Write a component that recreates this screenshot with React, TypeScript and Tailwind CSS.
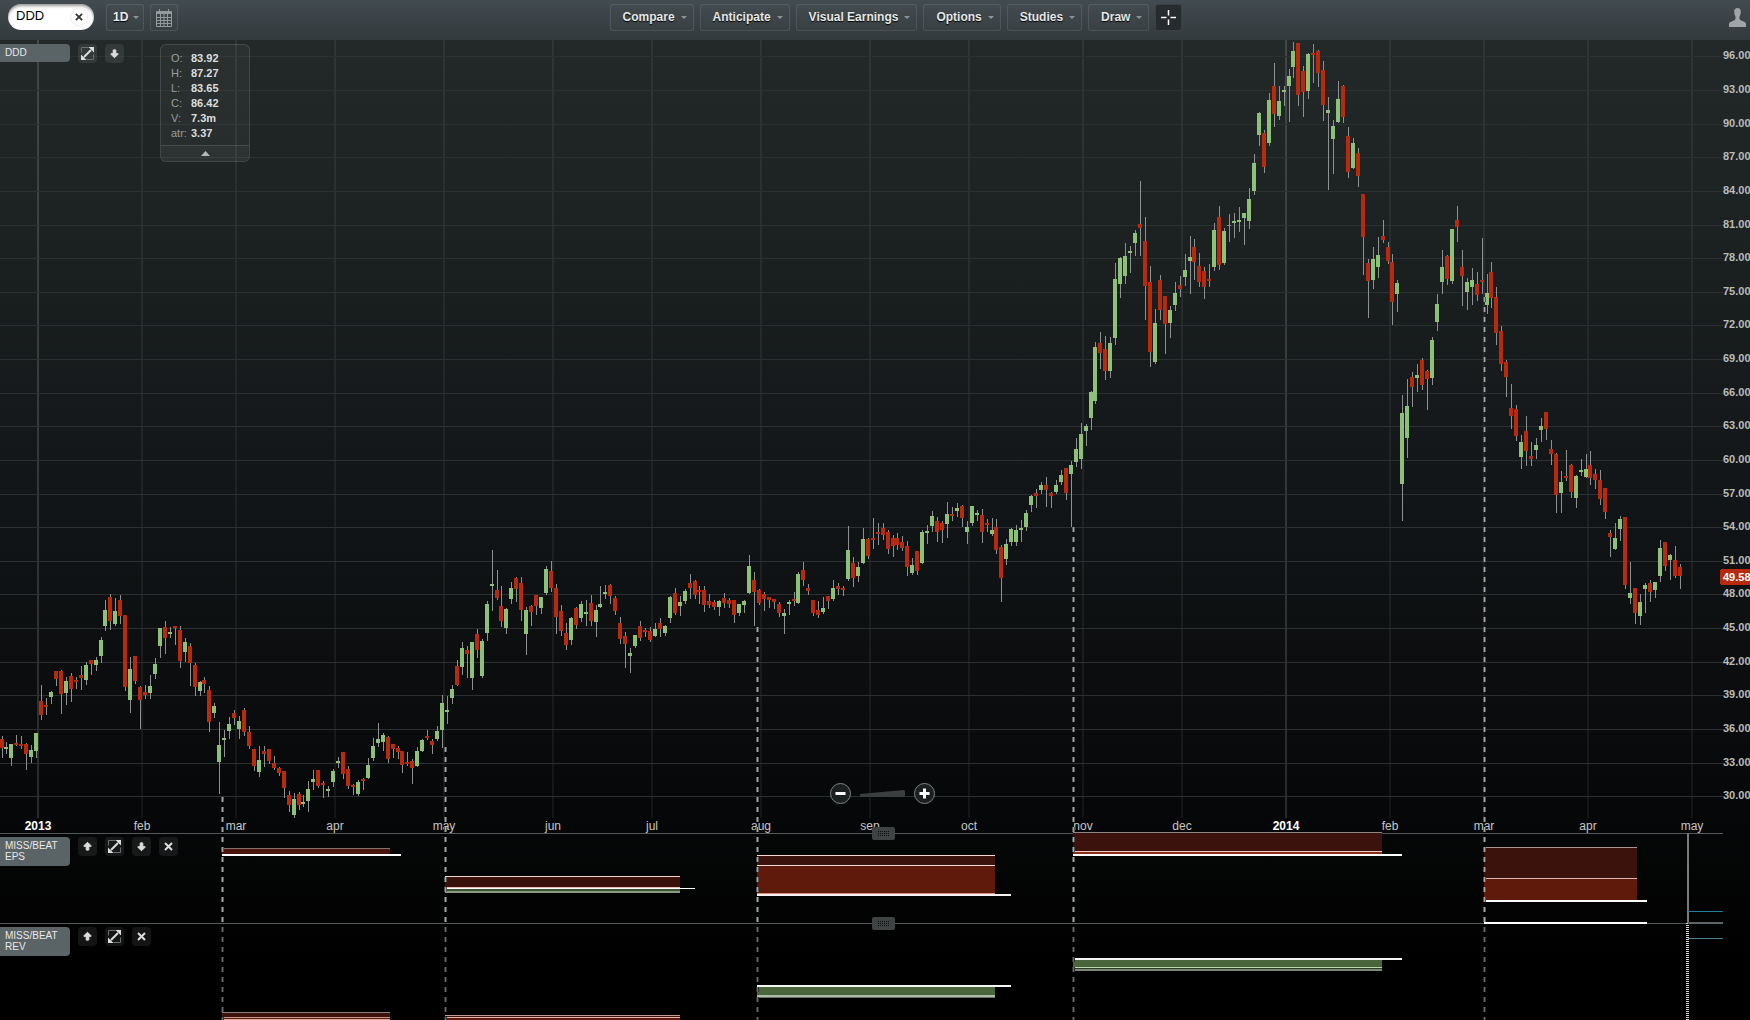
import { ArrowBigDown, ArrowBigUp } from "lucide-react"
import type { ReactNode } from "react"

// [high, open, close, low] as y positions in the price pane, one entry per trading day
const candles: number[][] = [
  [736, 739, 748, 758], [742, 749, 747, 754], [744, 758, 744, 766], [735, 743, 745, 746], [736, 744, 746, 749],
  [743, 744, 754, 770], [745, 757, 750, 763], [733, 751, 733, 758], [685, 701, 715, 720], [698, 705, 707, 715],
  [691, 697, 692, 704], [671, 671, 679, 686], [670, 671, 694, 714], [677, 693, 681, 705], [673, 676, 689, 702],
  [677, 680, 682, 689], [666, 675, 678, 690], [662, 680, 665, 685], [660, 660, 664, 675], [657, 665, 660, 671],
  [637, 656, 640, 663], [600, 626, 610, 631], [594, 597, 621, 630], [598, 624, 611, 626], [595, 600, 616, 624],
  [615, 615, 687, 691], [657, 700, 669, 713], [656, 656, 681, 684], [686, 687, 700, 729], [685, 692, 695, 699],
  [675, 693, 686, 699], [658, 674, 664, 679], [628, 646, 628, 658], [621, 627, 638, 654], [627, 634, 632, 638],
  [626, 626, 628, 645], [626, 630, 661, 668], [638, 652, 642, 662], [643, 646, 663, 686], [663, 665, 687, 696],
  [681, 691, 682, 696], [677, 680, 684, 693], [686, 690, 722, 732], [703, 713, 706, 718], [722, 762, 745, 794],
  [730, 740, 738, 757], [717, 731, 724, 739], [710, 713, 718, 725], [716, 729, 721, 739], [708, 710, 732, 736],
  [726, 732, 746, 749], [749, 749, 766, 771], [746, 772, 760, 777], [746, 751, 754, 767], [749, 749, 761, 764],
  [756, 763, 768, 770], [767, 768, 773, 776], [771, 771, 788, 798], [791, 795, 805, 812], [793, 815, 799, 818],
  [792, 794, 805, 810], [795, 804, 802, 807], [781, 801, 789, 812], [770, 782, 779, 790], [770, 770, 786, 788],
  [781, 783, 785, 798], [786, 791, 789, 797], [769, 782, 771, 787], [757, 763, 761, 768], [752, 752, 774, 779],
  [766, 769, 786, 789], [784, 785, 787, 795], [780, 794, 782, 796], [778, 779, 781, 790], [758, 778, 765, 779],
  [738, 758, 746, 761], [723, 743, 739, 747], [733, 742, 735, 751], [736, 737, 759, 763], [744, 744, 749, 758],
  [746, 748, 752, 759], [751, 751, 765, 773], [752, 762, 764, 766], [759, 761, 768, 784], [747, 766, 751, 767],
  [739, 751, 740, 752], [730, 736, 738, 740], [739, 741, 745, 754], [726, 739, 731, 741], [695, 730, 703, 748],
  [696, 712, 710, 724], [685, 698, 689, 704], [660, 666, 685, 686], [642, 667, 648, 675], [646, 650, 654, 678],
  [642, 678, 642, 690], [629, 634, 650, 658], [639, 676, 641, 678], [601, 633, 604, 641], [550, 586, 584, 611],
  [570, 590, 598, 600], [586, 606, 621, 627], [608, 628, 609, 634], [582, 599, 588, 604], [577, 578, 589, 602],
  [577, 583, 610, 621], [607, 634, 610, 655], [605, 606, 612, 626], [595, 595, 606, 615], [597, 608, 597, 614],
  [566, 593, 569, 595], [561, 571, 588, 592], [584, 588, 617, 634], [605, 611, 631, 636], [623, 633, 645, 650],
  [617, 640, 618, 645], [607, 608, 625, 629], [601, 618, 604, 622], [600, 614, 612, 626], [595, 603, 621, 626],
  [605, 622, 610, 637], [586, 607, 604, 608], [585, 594, 592, 599], [584, 585, 596, 604], [596, 598, 611, 615],
  [617, 623, 639, 644], [632, 636, 644, 668], [648, 656, 653, 673], [635, 646, 635, 648], [621, 626, 638, 641],
  [628, 630, 632, 637], [627, 631, 640, 642], [623, 636, 629, 637], [618, 623, 629, 637], [625, 633, 626, 636],
  [596, 618, 597, 623], [588, 593, 613, 615], [596, 606, 602, 616], [589, 601, 591, 604], [574, 583, 588, 599],
  [580, 581, 595, 599], [586, 590, 592, 604], [586, 590, 605, 612], [594, 601, 605, 608], [600, 602, 607, 610],
  [600, 607, 601, 616], [593, 598, 603, 608], [598, 600, 604, 608], [600, 600, 615, 623], [604, 613, 604, 616],
  [600, 605, 601, 613], [555, 593, 566, 594], [572, 580, 592, 626], [589, 590, 603, 605], [592, 594, 599, 611],
  [597, 597, 600, 608], [599, 599, 602, 609], [602, 604, 613, 617], [609, 616, 613, 634], [600, 604, 602, 615],
  [592, 599, 601, 606], [572, 603, 574, 604], [562, 570, 580, 586], [584, 588, 591, 595], [600, 600, 613, 616],
  [601, 610, 615, 618], [597, 612, 608, 614], [596, 596, 601, 609], [580, 599, 588, 601], [583, 586, 589, 595],
  [586, 588, 590, 596], [526, 579, 550, 581], [557, 563, 578, 587], [562, 576, 567, 582], [528, 563, 539, 564],
  [538, 539, 556, 559], [518, 538, 540, 549], [523, 532, 534, 545], [523, 528, 535, 540], [530, 532, 549, 554],
  [535, 538, 546, 557], [533, 538, 545, 550], [536, 542, 548, 551], [541, 546, 567, 576], [558, 573, 565, 575],
  [551, 551, 571, 575], [530, 563, 532, 564], [525, 533, 531, 544], [511, 526, 516, 532], [517, 521, 532, 542],
  [521, 523, 530, 543], [502, 524, 514, 538], [507, 514, 516, 521], [503, 511, 508, 517], [505, 506, 518, 527],
  [521, 532, 527, 544], [506, 523, 506, 526], [510, 515, 513, 521], [509, 515, 532, 543], [519, 523, 525, 532],
  [518, 534, 530, 536], [519, 527, 550, 554], [545, 547, 578, 602], [539, 559, 544, 565], [528, 542, 529, 546],
  [525, 542, 530, 546], [520, 530, 528, 542], [510, 527, 513, 531], [495, 505, 496, 512], [489, 493, 496, 508],
  [482, 490, 485, 494], [477, 485, 490, 507], [492, 493, 496, 508], [480, 492, 485, 494], [470, 482, 475, 485],
  [468, 468, 493, 500], [461, 474, 465, 527], [438, 462, 449, 467], [423, 459, 434, 469], [424, 431, 426, 446],
  [391, 418, 392, 430], [342, 401, 347, 404], [332, 343, 353, 369], [336, 349, 371, 380], [337, 371, 343, 378],
  [263, 338, 279, 345], [257, 284, 258, 298], [243, 276, 256, 284], [246, 253, 251, 273], [230, 243, 233, 256],
  [181, 224, 228, 256], [217, 241, 286, 320], [266, 282, 352, 367], [309, 362, 323, 364], [275, 280, 310, 320],
  [296, 296, 324, 354], [306, 323, 310, 338], [282, 305, 293, 311], [276, 285, 289, 297], [254, 277, 270, 286],
  [236, 261, 257, 294], [239, 247, 262, 280], [253, 266, 282, 287], [267, 271, 287, 299], [264, 279, 281, 287],
  [223, 267, 230, 271], [206, 217, 265, 270], [228, 263, 231, 265], [214, 225, 225, 242], [213, 223, 221, 238],
  [207, 222, 220, 232], [213, 218, 213, 245], [188, 221, 199, 229], [154, 191, 163, 195], [112, 135, 113, 146],
  [130, 133, 167, 173], [93, 143, 100, 146], [63, 86, 114, 127], [86, 116, 101, 120], [86, 92, 90, 106],
  [69, 86, 76, 122], [42, 67, 51, 78], [43, 43, 95, 106], [66, 71, 92, 117], [53, 91, 54, 99],
  [44, 53, 55, 83], [50, 51, 73, 87], [61, 70, 105, 121], [97, 113, 110, 190], [120, 139, 126, 174],
  [81, 122, 99, 123], [85, 86, 117, 123], [127, 136, 172, 178], [138, 168, 143, 169], [148, 153, 176, 187],
  [194, 194, 237, 275], [259, 263, 281, 318], [247, 280, 259, 289], [237, 267, 255, 278], [220, 236, 240, 243],
  [242, 247, 261, 264], [254, 262, 302, 325], [280, 294, 283, 312], [395, 484, 413, 521], [379, 438, 406, 458],
  [372, 377, 387, 407], [364, 378, 375, 392], [358, 360, 385, 390], [370, 371, 379, 410], [337, 378, 340, 385],
  [294, 322, 304, 331], [250, 282, 267, 294], [255, 256, 279, 285], [229, 281, 229, 284], [206, 220, 227, 242],
  [250, 267, 276, 306], [278, 292, 282, 310], [268, 287, 280, 305], [272, 284, 295, 301], [238, 280, 282, 294],
  [274, 305, 293, 314], [262, 272, 298, 308], [287, 297, 333, 345], [326, 331, 364, 371], [360, 362, 377, 397],
  [384, 408, 416, 429], [405, 409, 436, 441], [435, 457, 442, 469], [416, 431, 451, 466], [442, 456, 459, 466],
  [438, 450, 445, 459], [418, 430, 426, 442], [412, 412, 429, 440], [440, 449, 454, 465], [453, 454, 495, 513],
  [471, 493, 482, 513], [450, 476, 478, 481], [464, 465, 492, 498], [475, 498, 476, 508], [459, 472, 470, 476],
  [454, 477, 469, 478], [451, 465, 478, 485], [469, 474, 480, 489], [470, 480, 499, 505], [488, 488, 512, 519],
  [530, 533, 537, 557], [523, 549, 538, 550], [516, 529, 519, 541], [517, 517, 585, 589], [562, 598, 593, 604],
  [588, 588, 613, 624], [594, 616, 602, 625], [583, 589, 585, 613], [580, 583, 592, 602], [582, 590, 582, 598],
  [540, 576, 548, 582], [542, 542, 566, 571], [554, 560, 555, 580], [546, 560, 576, 578], [564, 567, 576, 589],
]

const months: [string, number][] = [
  ["2013", 38], ["feb", 142], ["mar", 236], ["apr", 335], ["may", 444], ["jun", 553],
  ["jul", 652], ["aug", 761], ["sep", 870], ["oct", 969], ["nov", 1083], ["dec", 1182],
  ["2014", 1286], ["feb", 1390], ["mar", 1484], ["apr", 1588], ["may", 1692],
]

// earnings dates: x and where the dashed line starts
const earnings = [[222, 797], [445, 747], [757, 627], [1073, 527], [1484, 297]]

const prices = Array.from({ length: 23 }, (_, i) => ({
  label: (96 - i * 3).toFixed(2),
  y: Math.round(56.4 + i * 33.63),
}))

const menus = ["Compare", "Anticipate", "Visual Earnings", "Options", "Studies", "Draw"]

const stats = [
  ["O:", "83.92"],
  ["H:", "87.27"],
  ["L:", "83.65"],
  ["C:", "86.42"],
  ["V:", "7.3m"],
  ["atr:", "3.37"],
]

// x, y, width, height, fill
type Bar = [number, number, number, number, string]

const epsBars: Bar[] = [
  [222, 848, 168, 1, "#85716e"], [222, 849, 168, 5, "#4a130b"], [222, 854, 179, 2, "#ffffff"],
  [445, 876, 235, 1, "#f0d5d0"], [445, 877, 235, 10, "#3b120c"], [445, 887, 235, 1, "#e8b9b0"],
  [445, 888, 250, 1, "#ffffff"], [445, 889, 235, 2, "#3c5230"], [445, 891, 235, 2, "#8c9a86"],
  [757, 855, 238, 1, "#f3d8d4"], [757, 856, 238, 9, "#3b120c"], [757, 865, 238, 1, "#f3d8d4"],
  [757, 866, 238, 27, "#601a0b"], [757, 893, 238, 1, "#d98c7c"], [757, 894, 254, 2, "#f5f0ef"],
  [1073, 832, 309, 1, "#8e8684"], [1073, 833, 309, 18, "#3b120c"], [1073, 851, 309, 1, "#f3c9c2"],
  [1073, 852, 309, 2, "#8a2a18"], [1073, 854, 329, 2, "#ffffff"],
  [1484, 847, 153, 1, "#a89491"], [1484, 848, 153, 30, "#3b120c"], [1484, 878, 153, 1, "#d9b8b2"],
  [1484, 879, 153, 21, "#601a0b"], [1484, 900, 163, 2, "#ffffff"],
]

const revBars: Bar[] = [
  [1484, 922, 163, 2, "#ffffff"],
  [222, 1012, 168, 1, "#8c7f7d"], [222, 1013, 168, 4, "#3b120c"], [222, 1017, 168, 1, "#c79a92"],
  [222, 1018, 168, 1, "#601a0b"], [222, 1019, 168, 1, "#d9a79e"],
  [445, 1015, 235, 1, "#c79a92"], [445, 1016, 235, 1, "#3b120c"], [445, 1017, 235, 1, "#e0b5ad"],
  [445, 1018, 235, 2, "#601a0b"],
  [757, 985, 254, 2, "#f4f6f3"], [757, 987, 238, 8, "#49653b"], [757, 995, 238, 2, "#aebda7"],
  [757, 997, 238, 1, "#6a7366"],
  [1073, 958, 329, 2, "#f4f6f3"], [1073, 960, 309, 7, "#49653b"], [1073, 967, 309, 1, "#b9d6ac"],
  [1073, 968, 309, 1, "#2a3b22"], [1073, 969, 309, 2, "#7f877b"],
]

function Caret() {
  return (
    <svg className="h-[3px] w-1.5 fill-[#8b9598]" viewBox="0 0 6 3" aria-hidden="true">
      <path d="M0 0h6L3 3z" />
    </svg>
  )
}

function ExpandIcon() {
  return (
    <svg className="size-[15px]" viewBox="0 0 15 15" fill="none" aria-hidden="true">
      <path d="M1.500 6.500v-5h7M13.500 8.500v5h-7" stroke="#6a6e6f" />
      <path d="M4 11l7-7" stroke="#dddddd" strokeWidth="2" />
      <path d="M14 1v5.500L8.500 1zM1 14V8.500L6.500 14z" fill="#dddddd" />
    </svg>
  )
}

function CrossIcon({ className }: { className: string }) {
  return (
    <svg className={className} viewBox="0 0 9 9" aria-hidden="true">
      <path d="M1 1l7 7M8 1L1 8" stroke="currentColor" strokeWidth="2" />
    </svg>
  )
}

function PaneButton({ label, children }: { label: string; children: ReactNode }) {
  return (
    <button
      aria-label={label}
      className="flex size-[19px] items-center justify-center rounded bg-white/8 text-[#dddddd]"
    >
      {children}
    </button>
  )
}

function PaneHeader({ title, up, down, close }: { title: string; up?: boolean; down?: boolean; close?: boolean }) {
  return (
    <div className="absolute left-0 top-1 flex items-start gap-2">
      <h2 className="w-[70px] rounded-r bg-[#5a6366] px-[5px] pt-[3px] pb-1 text-[10px] leading-[11px] text-[#e8eaea]">
        {title}
      </h2>
      {up && <PaneButton label="Move up"><ArrowBigUp className="size-[11px] fill-current" /></PaneButton>}
      <PaneButton label="Expand"><ExpandIcon /></PaneButton>
      {down && <PaneButton label="Move down"><ArrowBigDown className="size-[11px] fill-current" /></PaneButton>}
      {close && <PaneButton label="Close"><CrossIcon className="size-[9px]" /></PaneButton>}
    </div>
  )
}

function Grip() {
  return (
    <div className="absolute inset-x-0 -top-1.5 flex justify-center pl-[17px]">
      <button aria-label="Resize pane" className="flex h-[13px] w-[23px] items-center justify-center rounded-xs bg-[#3f4344]">
        <svg className="h-[5px] w-[11px]" viewBox="0 0 11 5" aria-hidden="true">
          <path d="M0 .5h11M0 2.500h11M0 4.500h11" stroke="#0c0e0e" strokeDasharray="1 1" />
        </svg>
      </button>
    </div>
  )
}

function Bars({ bars }: { bars: Bar[] }) {
  return bars.map(([x, y, width, height, fill]) => (
    <rect key={`${x}-${y}`} x={x} y={y} width={width} height={height} fill={fill} />
  ))
}

// dashed marker with a bright core and softer edges
function EarningsLine({ x, from, to, dim }: { x: number; from: number; to: number; dim?: boolean }) {
  return (
    <g strokeDasharray="5 5">
      <line x1={x + 0.5} x2={x + 0.5} y1={from} y2={to} stroke={dim ? "#2e2e2e" : "#555656"} strokeWidth={3} />
      <line x1={x + 0.5} x2={x + 0.5} y1={from} y2={to} stroke={dim ? "#6a6a6a" : "#a6a6a6"} strokeWidth={1} />
    </g>
  )
}

function Toolbar() {
  const box = "h-[27px] rounded-[3px] border border-white/10 bg-white/1"
  return (
    <header className="flex h-10 items-start bg-linear-to-b from-[#424b4f] to-[#333a3e] pt-1 pl-2">
      <div className="flex">
        <div className="flex h-[26px] w-[86px] items-center rounded-full bg-white pr-1.5 pl-2 shadow-[inset_0_2px_3px_#00000066]">
          <input
            aria-label="Symbol"
            defaultValue="DDD"
            className="w-full min-w-0 bg-transparent pb-0.5 text-[13px] text-black outline-none"
          />
          <button
            aria-label="Clear symbol"
            className="flex size-[18px] shrink-0 items-center justify-center rounded-full border border-[#eeeeee] text-[#333333]"
          >
            <CrossIcon className="size-2" />
          </button>
        </div>
        <label className={`${box} relative ml-3 flex w-[38px] items-center`}>
          <select
            aria-label="Interval"
            className="h-full w-full appearance-none bg-transparent pb-0.5 pl-1.5 text-[12px] font-bold text-[#eeeeee] outline-none [text-shadow:0_1px_1px_#000]"
          >
            <option>1D</option>
            <option>1W</option>
          </select>
          <span className="pointer-events-none absolute right-1">
            <Caret />
          </span>
        </label>
        <button aria-label="Date range" className={`${box} ml-1.5 flex w-7 items-center justify-center`}>
          <svg className="h-[18px] w-4" viewBox="0 0 16 18" fill="none" stroke="#949b9d" aria-hidden="true">
            <path d="M.5 2.500h15v15H.5z" />
            <path d="M1 4h14" strokeWidth="2" />
            <path d="M3.500 0v3M12.500 0v3M4.500 5v12M8 5v12M11.500 5v12M1 8.500h14M1 11.500h14M1 14.500h14" />
          </svg>
        </button>
      </div>
      <nav className="flex flex-1 justify-center gap-1.5">
        {menus.map((name) => (
          <button
            key={name}
            aria-haspopup="menu"
            className={`${box} flex items-center gap-1.5 whitespace-nowrap pr-1.5 pl-3 text-[12px] font-bold text-[#e6e8e8] [text-shadow:0_1px_1px_#000]`}
          >
            <span className="pb-0.5">{name}</span>
            <Caret />
          </button>
        ))}
        <button aria-label="Crosshair" className="flex h-[27px] w-[27px] items-center justify-center rounded-[3px] border border-white/10 bg-[#262b2e]">
          <svg className="size-[15px]" viewBox="0 0 15 15" stroke="#ffffff" aria-hidden="true">
            <path d="M7.500 0v5.500M7.500 9.500V15M0 7.500h5.500M9.500 7.500H15" strokeWidth="1.500" />
          </svg>
        </button>
      </nav>
      <div className="flex w-[136px] justify-end pt-1 pr-1">
        <button aria-label="Account">
          <svg className="h-[19px] w-[17px] fill-[#a0a6a7]" viewBox="0 0 17 19" aria-hidden="true">
            <path d="M8.500 0c2.200 0 3.300 1.400 3.300 3.400 0 1.500-.2 2.600-.6 3.700-.4 1-.8 1.600-.8 2.500 0 1.500.4 2.300 1.700 2.900l3 1.300c1.300.6 1.900 1.400 1.900 2.700V19H0v-2.500c0-1.300.6-2.100 1.900-2.700l3-1.300c1.300-.6 1.700-1.400 1.700-2.900 0-.9-.4-1.500-.8-2.500-.4-1.100-.6-2.200-.6-3.700C5.200 1.400 6.300 0 8.500 0z" />
          </svg>
        </button>
      </div>
    </header>
  )
}

function PriceChart() {
  return (
    <svg className="block w-full" viewBox="0 40 1750 793" shapeRendering="crispEdges" role="img" aria-label="DDD daily price">
      {months.map(([, x], i) => (
        <rect key={i} x={x - 1} y={40} width={2} height={778} fill="#ffffff" fillOpacity={i === 0 || i === 12 ? 0.14 : 0.06} />
      ))}
      {prices.map(({ y }) => (
        <rect key={y} x={0} y={y} width={1723} height={1} fill="#2b3133" />
      ))}
      {candles.map(([high, open, close, low], i) => {
        const x = Math.floor(i * 4.95)
        const fill = open === close ? "#8c8c8c" : close < open ? "#8cc177" : "#b72a0d"
        return (
          <g key={i}>
            <rect x={x + 2} y={high} width={1} height={low - high} fill="#8f9090" />
            <rect x={x} y={Math.min(open, close)} width={4} height={Math.abs(close - open) || 1} fill={fill} />
          </g>
        )
      })}
      {months.map(([name, x], i) => (
        <text
          key={i}
          x={x}
          y={830}
          textAnchor="middle"
          className={i === 0 || i === 12 ? "fill-white text-[12px] font-bold" : "fill-[#c6c6c6] text-[12px]"}
        >
          {name}
        </text>
      ))}
      {earnings.map(([x, y]) => (
        <EarningsLine key={x} x={x} from={y} to={833} />
      ))}
      {prices.map(({ label, y }) => (
        <text key={label} x={1723} y={y + 3} className="fill-[#b9bcbc] text-[11px] font-bold">
          {label}
        </text>
      ))}
      <rect x={1720} y={569} width={34} height={16} rx={3} fill="#b72a0d" />
      <text x={1723} y={581} className="fill-white text-[11px] font-bold">49.58</text>
    </svg>
  )
}

function Quote() {
  return (
    <div className="absolute left-40 top-1 w-[90px] rounded-md border border-white/12 bg-white/4 text-[11px] leading-[15px]">
      <dl className="grid grid-cols-[20px_1fr] pt-1.5 pb-1 pl-2.5">
        {stats.map(([name, value]) => (
          <div key={name} className="contents">
            <dt className="text-[#9a9e9e]">{name}</dt>
            <dd className="font-bold text-[#dcdede]">{value}</dd>
          </div>
        ))}
      </dl>
      <button aria-label="Collapse quote" className="flex h-4 w-full items-center justify-center rounded-b-md border-t border-white/12 bg-white/3">
        <svg className="h-[5px] w-[9px] fill-[#b5b8b8]" viewBox="0 0 9 5" aria-hidden="true">
          <path d="M0 5h9L4.500 0z" />
        </svg>
      </button>
    </div>
  )
}

function ZoomControl() {
  const knob = "flex size-[21px] items-center justify-center rounded-full border border-[#808585] bg-[#1b1f20]"
  return (
    <div className="absolute inset-x-0 bottom-[29px] flex justify-center pl-[15px]">
      <div className="flex w-[105px] items-center justify-between">
        <button aria-label="Zoom out" className={knob}>
          <svg className="size-[11px]" viewBox="0 0 11 11" stroke="#ffffff" strokeWidth="3" aria-hidden="true">
            <path d="M.5 5.500h10" />
          </svg>
        </button>
        <svg className="h-[7px] w-[45px]" viewBox="0 0 45 7" fill="#3c3f3f" aria-hidden="true">
          <path d="M0 4L44 0l1 1v5l-1 1H0z" />
        </svg>
        <button aria-label="Zoom in" className={knob}>
          <svg className="size-[11px]" viewBox="0 0 11 11" stroke="#ffffff" strokeWidth="3" aria-hidden="true">
            <path d="M.5 5.500h10M5.500 .5v10" />
          </svg>
        </button>
      </div>
    </div>
  )
}

function App() {
  return (
    <div className="flex h-screen flex-col overflow-hidden bg-black font-['Liberation_Sans',Arial,sans-serif]">
      <Toolbar />
      <main className="flex-1 bg-linear-to-b/srgb from-[#232929] via-[#111416] via-50% to-black to-95%">
        <section className="relative">
          <PriceChart />
          <PaneHeader title="DDD" down />
          <Quote />
          <ZoomControl />
        </section>

        <section className="relative">
          <svg className="block w-full overflow-visible" viewBox="0 833 1750 90" shapeRendering="crispEdges" role="img" aria-label="EPS miss or beat">
            <rect x={0} y={833} width={1723} height={1} fill="#555858" />
            <Bars bars={epsBars} />
            {earnings.map(([x]) => (
              <EarningsLine key={x} x={x} from={837} to={923} />
            ))}
            <rect x={1687} y={833} width={2} height={90} fill="#7a7a7a" />
            <rect x={1688} y={911} width={35} height={1} fill="#22809a" />
          </svg>
          <PaneHeader title="MISS/BEAT EPS" up down close />
          <Grip />
        </section>

        <section className="relative">
          <svg className="block w-full overflow-visible" viewBox="0 923 1750 97" shapeRendering="crispEdges" role="img" aria-label="Revenue miss or beat">
            <rect x={0} y={923} width={1723} height={1} fill="#555858" />
            <Bars bars={revBars} />
            {earnings.map(([x]) => (
              <EarningsLine key={x} x={x} from={927} to={1020} dim />
            ))}
            <line x1={1687.5} x2={1687.5} y1={923} y2={1020} stroke="#d5d5d5" strokeWidth={3} strokeDasharray="1 1" />
            <rect x={1688} y={922} width={35} height={2} fill="#5d6669" />
            <rect x={1688} y={938} width={35} height={1} fill="#4f7f90" />
          </svg>
          <PaneHeader title="MISS/BEAT REV" up close />
          <Grip />
        </section>
      </main>
    </div>
  )
}

export default App
